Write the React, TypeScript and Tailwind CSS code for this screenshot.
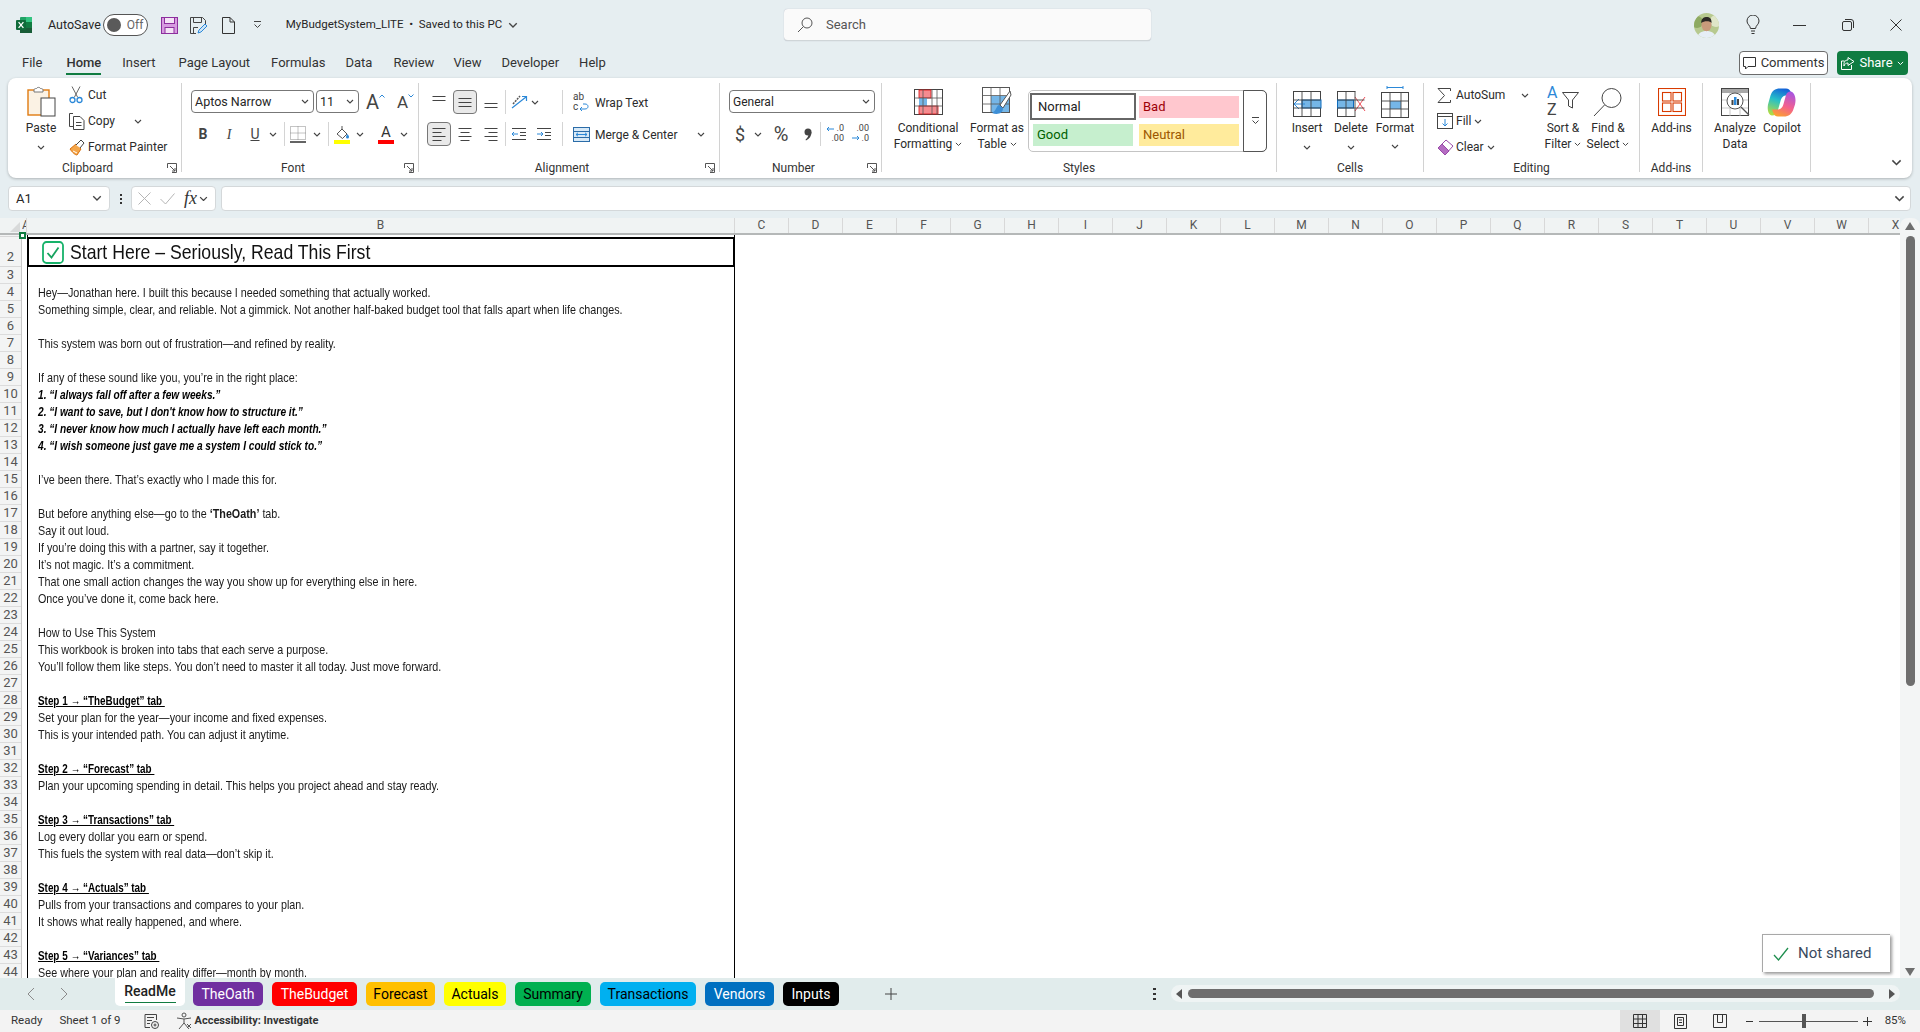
import type { ReactNode } from "react";

// ---- small shared bits ----
function Chev({ className = "", w = 8 }: { className?: string; w?: number }) {
  return (
    <svg width={w} height={w * 0.625} viewBox="0 0 8 5" className={`shrink-0 ${className}`} fill="none" stroke="#444" strokeWidth="1.1">
      <path d="M1 1l3 3 3-3" />
    </svg>
  );
}

function Divider({ className = "" }: { className?: string }) {
  return <div className={`w-px h-[24px] bg-[#d4d4d4] shrink-0 ${className}`} />;
}

function Launcher() {
  return (
    <svg width="10" height="10" viewBox="0 0 10 10" fill="none" stroke="#555" strokeWidth="1">
      <path d="M0.5 5V0.5H9.5V9.5H5" />
      <path d="M3 3l5 5M5 8h3V5" />
    </svg>
  );
}

function Group({ label, launcher, className = "", children }: { label?: string; launcher?: boolean; className?: string; children: ReactNode }) {
  return (
    <div className={`h-[89px] flex flex-col shrink-0 border-r border-[#d2d2d2] ${className}`}>
      <div className="h-[79px] shrink-0">{children}</div>
      <div className="flex items-center h-[12px] shrink-0">
        <div className="flex-1 text-center text-[12px] leading-[12px] text-[#333]">{label}</div>
        {launcher && (
          <div className="w-[14px] shrink-0">
            <Launcher />
          </div>
        )}
      </div>
    </div>
  );
}

function Large({ icon, lines, className = "" }: { icon: ReactNode; lines: ReactNode[]; className?: string }) {
  return (
    <div className={`flex flex-col items-center shrink-0 ${className}`}>
      <div className="h-[32px] mt-[3px] flex items-center justify-center">{icon}</div>
      <div className="mt-[2px] text-[12px] leading-[16px] text-[#2b2b2b] text-center whitespace-nowrap">
        {lines.map((l, i) => (
          <div key={i} className="flex items-center justify-center gap-[3px] h-[16px]">
            {l}
          </div>
        ))}
      </div>
    </div>
  );
}

function Small({ icon, text, chev, chevClass = "ml-[3px]" }: { icon: ReactNode; text: string; chev?: boolean; chevClass?: string }) {
  return (
    <div className="flex items-center h-[26px] whitespace-nowrap text-[12px] text-[#2b2b2b]">
      <div className="w-[19px] shrink-0 flex items-center">{icon}</div>
      {text}
      {chev && <Chev className={chevClass} />}
    </div>
  );
}

function Slot({ w, selected, children, className = "" }: { w: string; selected?: boolean; children: ReactNode; className?: string }) {
  return (
    <div className={`${w} h-[24px] shrink-0 flex items-center justify-center ${className}`}>
      {selected ? (
        <div className="w-[24px] h-[24px] rounded-[4px] bg-[#e9e9e9] border border-[#777] flex items-center justify-center">{children}</div>
      ) : (
        children
      )}
    </div>
  );
}

// ---- title bar icons ----
function ExcelLogo() {
  return (
    <svg width="18" height="18" viewBox="0 0 18 18">
      <rect x="5" y="1" width="12" height="16" rx="1" fill="#21a366" />
      <rect x="11" y="1" width="6" height="5" fill="#33c481" />
      <rect x="11" y="6" width="6" height="5.5" fill="#107c41" />
      <rect x="5" y="11.5" width="12" height="5.5" fill="#185c37" />
      <rect x="1" y="4" width="10" height="10" rx="1" fill="#0f6b3a" />
      <path d="M3.6 6.2l4.8 5.6M8.4 6.2l-4.8 5.6" stroke="#fff" strokeWidth="1.3" />
    </svg>
  );
}

function SavePurple() {
  return (
    <svg width="17" height="17" viewBox="0 0 17 17">
      <rect x="0.5" y="0.5" width="16" height="16" fill="#d79be0" stroke="#8d2f9e" />
      <rect x="3.5" y="0.5" width="10" height="6" fill="#f4e3f6" stroke="#8d2f9e" />
      <rect x="4" y="10.5" width="9" height="6" fill="#f4e3f6" stroke="#8d2f9e" />
    </svg>
  );
}

function SaveAs() {
  return (
    <svg width="17" height="17" viewBox="0 0 17 17" fill="none" stroke="#444">
      <path d="M0.5 0.5H12.5L15.5 3.5V7M0.5 0.5V16.5H6" />
      <path d="M3.5 0.5V5.5H11.5V0.5M3.5 16.5V10.5H8" />
      <path d="M8 16l1-3 6-6 2 2-6 6z" stroke="#2b88d8" fill="#cfe5f7" />
    </svg>
  );
}

function NewDoc() {
  return (
    <svg width="13" height="17" viewBox="0 0 13 17" fill="none" stroke="#333">
      <path d="M0.5 0.5H8L12.5 5V16.5H0.5Z" />
      <path d="M8 0.5V5H12.5" />
    </svg>
  );
}

function Avatar() {
  return (
    <svg width="25" height="25" viewBox="0 0 25 25">
      <defs>
        <clipPath id="av">
          <circle cx="12.5" cy="12.5" r="12.5" />
        </clipPath>
      </defs>
      <g clipPath="url(#av)">
        <rect width="25" height="25" fill="#b7c98f" />
        <circle cx="3" cy="9" r="6" fill="#8eaa62" />
        <circle cx="22" cy="8" r="6" fill="#dfe6c8" />
        <path d="M3 25c1-6 6-7 9.5-7s8.5 1 9.5 7z" fill="#e6eef6" />
        <ellipse cx="12.5" cy="12" rx="5" ry="6.2" fill="#c99a7b" />
        <path d="M7.2 10c0-5 3-6 5.6-6s5 1.500 4.800 6c-1.600-2.500-7.500-2.500-10.400 0z" fill="#2e2a26" />
      </g>
    </svg>
  );
}

// ---- ribbon icons ----
function PasteIcon() {
  return (
    <svg width="29" height="32" viewBox="0 0 29 32">
      <rect x="1" y="4" width="21" height="25" fill="#fbf2e4" stroke="#e07b10" strokeWidth="1.4" />
      <path d="M7 4c0-1 1-1.500 2.500-1.500C10 1 13 1 13.500 2.500 15 2.500 16 3 16 4v2H7z" fill="#fff" stroke="#777" />
      <rect x="14" y="12" width="14" height="18" fill="#fff" stroke="#444" />
    </svg>
  );
}

function CutIcon() {
  return (
    <svg width="14" height="18" viewBox="0 0 14 18" fill="none">
      <path d="M3 0.500L8.500 11M11 0.500L5.500 11" stroke="#666" strokeWidth="1" />
      <circle cx="3.500" cy="14" r="2.500" stroke="#2b88d8" strokeWidth="1.300" />
      <circle cx="10.500" cy="14" r="2.500" stroke="#2b88d8" strokeWidth="1.300" />
    </svg>
  );
}

function CopyIcon() {
  return (
    <svg width="16" height="17" viewBox="0 0 16 17" fill="none" stroke="#444">
      <path d="M4 0.500H0.500V13.500H4" />
      <path d="M4.500 3.500H11L15 7.500V16.500H4.500Z" fill="#fff" />
      <path d="M7 9.500h5.500M7 12.500h5.500" />
    </svg>
  );
}

function PainterIcon() {
  return (
    <svg width="17" height="17" viewBox="0 0 17 17">
      <path d="M1 10l6-5 5 5-4 6c-2 0-5-3-7-6z" fill="#f4a64a" stroke="#d9720f" />
      <path d="M7 6l5-5 3 3-4 5" fill="#fff" stroke="#444" />
      <path d="M4 12l4 2" stroke="#fff" />
    </svg>
  );
}

function GrowA({ up }: { up: boolean }) {
  return (
    <div className="flex items-start text-[#444]">
      <span className={up ? "text-[20px] leading-[22px]" : "text-[17px] leading-[22px]"}>A</span>
      <svg width="6" height="4" viewBox="0 0 6 4" fill="none" stroke="#2b88d8" className="mt-[3px]">
        <path d={up ? "M0.500 3.500L3 1l2.500 2.500" : "M0.500 0.500L3 3l2.500-2.500"} />
      </svg>
    </div>
  );
}

function BordersIcon() {
  return (
    <svg width="16" height="17" viewBox="0 0 16 17" fill="none">
      <path d="M0.500 0.500H15.500V13.500H0.500ZM8 0.500V13.500M0.500 7H15.500" stroke="#888" strokeDasharray="1 1" />
      <path d="M0 16H16" stroke="#222" strokeWidth="1.400" />
    </svg>
  );
}

function FillIcon() {
  return (
    <svg width="16" height="19" viewBox="0 0 16 19">
      <path d="M3 9l5-5 5 5-4.500 4.500z" fill="#fff" stroke="#555" />
      <path d="M8 4V1" stroke="#555" />
      <path d="M13.500 9c1 1.500 1.500 2.300 1.500 3a1.300 1.300 0 0 1-3 0c0-.7.5-1.500 1.500-3z" fill="#2b88d8" />
      <rect x="0" y="15" width="16" height="4" fill="#ffff00" />
    </svg>
  );
}

function FontColorIcon() {
  return (
    <div className="flex flex-col items-center w-[16px]">
      <span className="text-[15px] leading-[15px] text-[#333]">A</span>
      <div className="w-[16px] h-[4px] bg-[#ff0000]" />
    </div>
  );
}

function Bars({ kind }: { kind: "top" | "mid" | "bot" | "l" | "c" | "r" }) {
  const base = "M1.500 ";
  const d: Record<string, string> = {
    top: `${base}2.500H14.500M1.500 6.500H14.500`,
    mid: `${base}4.500H14.500M1.500 8.500H14.500M1.500 12.500H14.500`,
    bot: `${base}9.500H14.500M1.500 13.500H14.500`,
    l: `${base}2.500H14.500M1.500 6.500H10.500M1.500 10.500H14.500M1.500 14.500H10.500`,
    c: `${base}2.500H14.500M3.500 6.500H12.500M1.500 10.500H14.500M3.500 14.500H12.500`,
    r: `${base}2.500H14.500M5.500 6.500H14.500M1.500 10.500H14.500M5.500 14.500H14.500`,
  };
  return (
    <svg width="16" height="16" viewBox="0 0 16 16" fill="none" stroke="#444">
      <path d={d[kind]} />
    </svg>
  );
}

function OrientIcon() {
  return (
    <svg width="18" height="16" viewBox="0 0 18 16" fill="none">
      <path d="M2 10L9 2" stroke="#555" strokeWidth="1.500" strokeDasharray="2 1" />
      <path d="M1 14L15 3M11 2.500h4.500V7" stroke="#2b88d8" strokeWidth="1.200" />
    </svg>
  );
}

function IndentIcon({ inc }: { inc?: boolean }) {
  return (
    <svg width="16" height="16" viewBox="0 0 16 16" fill="none">
      <path d="M1 2.500H15M1 13.500H15" stroke="#444" />
      <path d="M9 6.500H15M9 9.500H15" stroke="#444" />
      <path d={inc ? "M1 8H7M5 6l2 2-2 2" : "M7 8H1M3 6L1 8l2 2"} stroke="#2b88d8" />
    </svg>
  );
}

function WrapIcon() {
  return (
    <div className="relative w-[16px] h-[20px] text-[10px] leading-[9.500px] text-[#444]">
      <span className="block">ab</span>
      <span className="block">c</span>
      <svg width="10" height="9" viewBox="0 0 10 9" fill="none" stroke="#2b88d8" className="absolute right-[0px] bottom-[1px]">
        <path d="M1 7h5c4 0 4-5 0-5H4M3 5L1 7l2 2" />
      </svg>
    </div>
  );
}

function MergeIcon() {
  return (
    <svg width="17" height="15" viewBox="0 0 17 15" fill="none">
      <rect x="0.500" y="0.500" width="16" height="14" fill="#d7e9f7" stroke="#2b6ca8" />
      <path d="M0.500 4.500H16.500M0.500 10.500H16.500" stroke="#2b6ca8" />
      <path d="M3 7.500H14M5 5.800L3 7.500l2 1.700M12 5.800l2 1.700-2 1.700" stroke="#2b88d8" />
    </svg>
  );
}

function DecimalIcon({ inc }: { inc?: boolean }) {
  return (
    <div className="relative w-[18px] h-[20px] text-[9px] leading-[9.500px] text-[#444] text-right">
      <div>{inc ? ".0" : ".00"}</div>
      <div>{inc ? ".00" : ".0"}</div>
      <svg width="9" height="6" viewBox="0 0 9 6" fill="none" stroke="#2b88d8" className={`absolute left-0 ${inc ? "top-[2px]" : "top-[11px]"}`}>
        <path d={inc ? "M8 3H1M3 1L1 3l2 2" : "M1 3h7M6 1l2 2-2 2"} />
      </svg>
    </div>
  );
}

function CommaIcon() {
  return (
    <svg width="8" height="13" viewBox="0 0 8 13" fill="#444">
      <circle cx="4" cy="4" r="3.500" />
      <path d="M7.500 4c0 4-2 7-5.500 8.500l-.5-.8C3.500 10 4.500 8 4.500 6z" />
    </svg>
  );
}

function CondFmtIcon() {
  return (
    <svg width="29" height="26" viewBox="0 0 29 26">
      <rect x="0.500" y="0.500" width="28" height="25" fill="#fff" stroke="#444" />
      <rect x="5" y="1" width="12" height="8" fill="#f58b8f" stroke="#d11" strokeWidth="0.800" />
      <rect x="5" y="9" width="8" height="8" fill="#75b6e7" />
      <rect x="5" y="17" width="19" height="8" fill="#f58b8f" stroke="#d11" strokeWidth="0.800" />
      <path d="M9 .5V25.500M18 .5V25.500M23 .5V25.500M.5 9H28.500M.5 17H28.500" stroke="#555" fill="none" strokeWidth="0.800" />
    </svg>
  );
}

function TableIcon() {
  return (
    <svg width="30" height="30" viewBox="0 0 30 30">
      <rect x="0.500" y="0.500" width="27" height="25" fill="#fff" stroke="#555" />
      <rect x="9" y="9" width="18" height="16" fill="#75b6e7" />
      <path d="M9 .5V25.500M18 .5V25.500M.5 8.500H27.500M.5 17H27.500" stroke="#555" fill="none" strokeWidth="0.800" />
      <path d="M28 4L18 18l3 3L29 8z" fill="#fff" stroke="#555" />
      <path d="M17 18c-3 1-2 5-7 8 5 2 11 1 11-5z" fill="#3d8fd6" />
    </svg>
  );
}

function GridIcon({ children }: { children?: ReactNode }) {
  return (
    <svg width="30" height="30" viewBox="0 0 30 30">
      <rect x="1.500" y="4.500" width="27" height="25" fill="#fff" stroke="#444" />
      {children}
      <path d="M10 4.500V29.500M19 4.500V29.500M1.500 13H28.500M1.500 21H28.500" stroke="#444" fill="none" strokeWidth="0.900" />
    </svg>
  );
}

function InsertIcon() {
  return (
    <GridIcon>
      <rect x="10" y="13" width="19" height="8" fill="#75b6e7" stroke="#0f6cbd" />
      <path d="M13 17H2M7 12l-5 5 5 5" stroke="#2b88d8" fill="#fff" />
    </GridIcon>
  );
}

function DeleteIcon() {
  return (
    <GridIcon>
      <rect x="1.500" y="13" width="16" height="8" fill="#75b6e7" stroke="#0f6cbd" />
      <rect x="19.500" y="4" width="10" height="26" fill="#fff" />
      <path d="M19 10l10 14M29 10L19 24" stroke="#f0505a" />
    </GridIcon>
  );
}

function FormatIcon() {
  return (
    <svg width="30" height="32" viewBox="0 0 30 32">
      <path d="M7 1.500H23M7 0V3M23 0V3" stroke="#2b88d8" fill="none" />
      <rect x="1.500" y="6.500" width="27" height="25" fill="#fff" stroke="#444" />
      <rect x="10" y="15" width="11" height="8" fill="#75b6e7" />
      <path d="M10 6.500V31.500M21 6.500V31.500M1.500 15H28.500M1.500 23H28.500" stroke="#444" fill="none" strokeWidth="0.900" />
    </svg>
  );
}

function FillDown() {
  return (
    <svg width="16" height="16" viewBox="0 0 16 16" fill="none">
      <rect x="0.500" y="0.500" width="15" height="15" stroke="#444" />
      <path d="M0.500 3.500H15.500" stroke="#444" />
      <path d="M8 6v7M5.500 10.500L8 13l2.500-2.500" stroke="#2b88d8" />
    </svg>
  );
}

function Eraser() {
  return (
    <svg width="17" height="17" viewBox="0 0 17 17">
      <path d="M1 9l8-8 7 6-8 9z" fill="#fff" stroke="#9a4aa8" />
      <path d="M1 9l4-4 7 7-4 4z" fill="#b46cc2" stroke="#9a4aa8" />
    </svg>
  );
}

function SortFilter() {
  return (
    <div className="relative w-[32px] h-[30px] text-[#444]">
      <span className="absolute left-0 top-[-2px] text-[16px] leading-[16px] text-[#2b88d8]">A</span>
      <span className="absolute left-0 top-[15px] text-[16px] leading-[16px]">Z</span>
      <svg width="17" height="17" viewBox="0 0 17 17" fill="none" stroke="#444" className="absolute right-0 top-[5px]">
        <path d="M0.500 0.500H16.500L10.500 8V16L6.500 14V8Z" />
      </svg>
    </div>
  );
}

function FindIcon() {
  return (
    <svg width="30" height="30" viewBox="0 0 30 30" fill="none" stroke="#444">
      <circle cx="18.500" cy="11" r="9.500" />
      <path d="M11.500 18L1 29" />
    </svg>
  );
}

function AddinsIcon() {
  return (
    <svg width="28" height="28" viewBox="0 0 28 28" fill="none" stroke="#d83b01" strokeWidth="1.100">
      <rect x="0.500" y="0.500" width="27" height="27" />
      <rect x="4.500" y="4.500" width="8.500" height="8.500" />
      <rect x="15" y="4.500" width="8.500" height="8.500" />
      <rect x="4.500" y="15" width="8.500" height="8.500" />
      <rect x="15" y="15" width="8.500" height="8.500" />
    </svg>
  );
}

function AnalyzeIcon() {
  return (
    <svg width="29" height="29" viewBox="0 0 29 29">
      <rect x="0.500" y="0.500" width="27" height="27" fill="#fff" stroke="#444" />
      <rect x="1" y="1" width="26" height="4" fill="#a8a8a8" />
      <path d="M9 5v23M19 5v23M1 12H27M1 20H27" stroke="#bbb" strokeWidth="0.800" />
      <circle cx="14" cy="13" r="8" fill="#fff" stroke="#555" />
      <path d="M20 19l8 8" stroke="#555" strokeWidth="1.200" />
      <rect x="10.500" y="12" width="2" height="5" fill="#444" />
      <rect x="13" y="9" width="2.500" height="8" fill="#2b88d8" />
      <rect x="16" y="11" width="2" height="6" fill="#444" />
    </svg>
  );
}

function CopilotIcon() {
  return (
    <svg width="30" height="29" viewBox="0 0 30 29">
      <defs>
        <linearGradient id="cpA" x1="0.600" y1="0" x2="0.300" y2="1">
          <stop offset="0" stopColor="#1464d8" />
          <stop offset="0.450" stopColor="#26c0c8" />
          <stop offset="1" stopColor="#b4dc40" />
        </linearGradient>
        <linearGradient id="cpB" x1="0.700" y1="0" x2="0.300" y2="1">
          <stop offset="0" stopColor="#a855e0" />
          <stop offset="0.550" stopColor="#f4608e" />
          <stop offset="1" stopColor="#fba030" />
        </linearGradient>
      </defs>
      <path d="M13 0.500h6c2.500 0 4 1.500 5 4l1 3h-5c-4 0-5.500 2-6.500 5.500l-2.500 9c-1 3.500-3 5.500-6 5.500C1.500 27 0 22 1 16.500l2.500-9C5 3 8 0.500 13 0.500z" fill="url(#cpA)" />
      <path d="M17 28.500h-6c-2.500 0-4-1.500-5-4l-1-3h5c4 0 5.500-2 6.500-5.500l2.500-9c.8-2.500 3-4 5-3.500 3.500 1 5.500 6.500 4 13l-1.500 4.500c-1.500 5-5 7.500-9.500 7.500z" fill="url(#cpB)" />
    </svg>
  );
}

// ---- sheet data ----
type Row = { n: number; t?: ReactNode; k?: "bi" | "step" };
const rowData: Row[] = [
  { n: 3 },
  { n: 4, t: "Hey—Jonathan here. I built this because I needed something that actually worked." },
  { n: 5, t: "Something simple, clear, and reliable. Not a gimmick. Not another half-baked budget tool that falls apart when life changes." },
  { n: 6 },
  { n: 7, t: "This system was born out of frustration—and refined by reality." },
  { n: 8 },
  { n: 9, t: "If any of these sound like you, you’re in the right place:" },
  { n: 10, k: "bi", t: "1. “I always fall off after a few weeks.”" },
  { n: 11, k: "bi", t: "2. “I want to save, but I don't know how to structure it.”" },
  { n: 12, k: "bi", t: "3. “I never know how much I actually have left each month.”" },
  { n: 13, k: "bi", t: "4. “I wish someone just gave me a system I could stick to.”" },
  { n: 14 },
  { n: 15, t: "I’ve been there. That’s exactly who I made this for." },
  { n: 16 },
  { n: 17, t: <>But before anything else—go to the <b>‘TheOath’</b> tab.</> },
  { n: 18, t: "Say it out loud." },
  { n: 19, t: "If you’re doing this with a partner, say it together." },
  { n: 20, t: "It’s not magic. It’s a commitment." },
  { n: 21, t: "That one small action changes the way you show up for everything else in here." },
  { n: 22, t: "Once you’ve done it, come back here." },
  { n: 23 },
  { n: 24, t: "How to Use This System" },
  { n: 25, t: "This workbook is broken into tabs that each serve a purpose." },
  { n: 26, t: "You’ll follow them like steps. You don’t need to master it all today. Just move forward." },
  { n: 27 },
  { n: 28, k: "step", t: "Step 1 → “TheBudget” tab " },
  { n: 29, t: "Set your plan for the year—your income and fixed expenses." },
  { n: 30, t: "This is your intended path. You can adjust it anytime." },
  { n: 31 },
  { n: 32, k: "step", t: "Step 2 → “Forecast” tab " },
  { n: 33, t: "Plan your upcoming spending in detail. This helps you project ahead and stay ready." },
  { n: 34 },
  { n: 35, k: "step", t: "Step 3 → “Transactions” tab " },
  { n: 36, t: "Log every dollar you earn or spend." },
  { n: 37, t: "This fuels the system with real data—don’t skip it." },
  { n: 38 },
  { n: 39, k: "step", t: "Step 4 → “Actuals” tab " },
  { n: 40, t: "Pulls from your transactions and compares to your plan." },
  { n: 41, t: "It shows what really happened, and where." },
  { n: 42 },
  { n: 43, k: "step", t: "Step 5 → “Variances” tab " },
  { n: 44, t: "See where your plan and reality differ—month by month." },
];

const columns = "CDEFGHIJKLMNOPQRSTUVWX".split("");

const tabs = [
  { name: "TheOath", cls: "w-[70px] bg-[#7030a0] text-white" },
  { name: "TheBudget", cls: "w-[85px] bg-[#ff0000] text-white" },
  { name: "Forecast", cls: "w-[69px] bg-[#ffc000] text-black" },
  { name: "Actuals", cls: "w-[62px] bg-[#ffff00] text-black" },
  { name: "Summary", cls: "w-[76px] bg-[#00b050] text-black" },
  { name: "Transactions", cls: "w-[96px] bg-[#00b0f0] text-black" },
  { name: "Vendors", cls: "w-[69px] bg-[#0070c0] text-white" },
  { name: "Inputs", cls: "w-[56px] bg-black text-white" },
];

const menu = [
  { name: "File", cls: "ml-[22px]" },
  { name: "Home", cls: "ml-[24px] font-medium border-b-2 border-[#107c41]" },
  { name: "Insert", cls: "ml-[21px]" },
  { name: "Page Layout", cls: "ml-[23px]" },
  { name: "Formulas", cls: "ml-[21px]" },
  { name: "Data", cls: "ml-[20px]" },
  { name: "Review", cls: "ml-[21px]" },
  { name: "View", cls: "ml-[19px]" },
  { name: "Developer", cls: "ml-[20px]" },
  { name: "Help", cls: "ml-[20px]" },
];

export default function App() {
  return (
    <div className="w-[1920px] h-[1032px] overflow-hidden flex flex-col bg-[#e6eef1] font-[Roboto,sans-serif] text-[#262626]">
      {/* title bar */}
      <div className="h-[50px] flex items-center shrink-0">
        <div className="w-[784px] shrink-0 flex items-center">
          <div className="ml-[15px]"><ExcelLogo /></div>
          <span className="ml-[15px] text-[12.5px]">AutoSave</span>
          <div className="ml-[2px] w-[45px] h-[22px] rounded-full border border-[#555] bg-white flex items-center">
            <div className="ml-[3px] w-[14px] h-[14px] rounded-full bg-[#5a5a5a]" />
            <span className="ml-[6px] text-[12px] text-[#666]">Off</span>
          </div>
          <div className="ml-[13px]"><SavePurple /></div>
          <div className="ml-[12px]"><SaveAs /></div>
          <div className="ml-[15px]"><NewDoc /></div>
          <svg width="9" height="8" viewBox="0 0 9 8" fill="none" stroke="#444" className="ml-[18px]">
            <path d="M1 .5H8M1.500 3.500l3 3 3-3" />
          </svg>
          <span className="ml-[24px] text-[11.5px] whitespace-nowrap">MyBudgetSystem_LITE&nbsp; •&nbsp; Saved to this PC</span>
          <Chev className="ml-[6px]" w={10} />
        </div>
        <div className="w-[367px] h-[32px] shrink-0 rounded-[4px] bg-[#fafafa] border-b border-[#cfd5d8] shadow-[0_0_1px_#aab] flex items-center">
          <svg width="16" height="16" viewBox="0 0 16 16" fill="none" stroke="#555" className="ml-[13px]">
            <circle cx="10" cy="6" r="5" />
            <path d="M6.500 9.500L1 15" />
          </svg>
          <span className="ml-[13px] text-[13px] text-[#555]">Search</span>
        </div>
        <div className="ml-[543px]"><Avatar /></div>
        <svg width="14" height="20" viewBox="0 0 14 20" fill="none" stroke="#333" className="ml-[27px]">
          <path d="M4.500 13.500C4 10 1 9.500 1 6a6 6 0 0 1 12 0c0 3.500-3 4-3.500 7.500zM5 16h4M5.500 18.500h3" />
        </svg>
        <div className="ml-[33px] w-[13px] h-px bg-[#333]" />
        <svg width="12" height="12" viewBox="0 0 12 12" fill="none" stroke="#333" className="ml-[36px]">
          <rect x="0.500" y="2.500" width="9" height="9" rx="1.500" />
          <path d="M3 .5h6a2.500 2.500 0 0 1 2.500 2.500v6" />
        </svg>
        <svg width="12" height="12" viewBox="0 0 12 12" fill="none" stroke="#333" className="ml-[36px]">
          <path d="M.5 .5l11 11M11.500 .5l-11 11" />
        </svg>
      </div>

      {/* menu row */}
      <div className="h-[28px] flex shrink-0 text-[13px] text-[#333] relative">
        {menu.map((m) => (
          <div key={m.name} className={`h-[25px] leading-[26px] whitespace-nowrap ${m.cls}`}>
            {m.name}
          </div>
        ))}
        <div className="ml-auto h-[24px] w-[89px] mt-px rounded-[4px] border border-[#6b6b6b] bg-white flex items-center justify-center gap-[5px]">
          <svg width="13" height="13" viewBox="0 0 13 13" fill="none" stroke="#333">
            <path d="M.5 .5H12.500V9.500H5L2.500 12V9.500H.5Z" />
          </svg>
          Comments
        </div>
        <div className="ml-[9px] mr-[12px] mt-px h-[24px] w-[71px] rounded-[4px] bg-[#107c41] text-white flex items-center justify-center gap-[4px]">
          <svg width="14" height="14" viewBox="0 0 14 14" fill="none" stroke="#fff">
            <path d="M3.500 5H.5V13.500H10.500V9M7 1.500l6 4-6 4V7C5 7 3.500 8 3 10 2.500 6 4 4 7 4z" />
          </svg>
          Share
          <Chev className="brightness-[10]" w={7} />
        </div>
      </div>

      {/* ribbon */}
      <div className="mx-[8px] h-[100px] shrink-0 rounded-[8px] bg-white shadow-[0_1px_3px_rgba(0,0,0,0.25)] flex pt-[5px] relative">
        <Group label="Clipboard" launcher className="w-[174px]">
          <div className="flex">
            <Large className="w-[56px] ml-[5px]" icon={<PasteIcon />} lines={["Paste", <Chev key="c" className="mt-[6px]" />]} />
            <div className="flex flex-col -mt-px">
              <Small icon={<CutIcon />} text="Cut" />
              <Small icon={<CopyIcon />} text="Copy" chev chevClass="ml-[19px]" />
              <Small icon={<PainterIcon />} text="Format Painter" />
            </div>
          </div>
        </Group>

        <Group label="Font" launcher className="w-[237px]">
          <div className="flex items-center mt-[7px] ml-[9px] h-[23px]">
            <div className="w-[123px] h-[23px] rounded-[4px] border border-[#777] flex items-center px-[3px] text-[12.5px] leading-[24px]">
              Aptos Narrow
              <Chev className="ml-auto mr-[1px]" />
            </div>
            <div className="ml-[2px] w-[43px] h-[23px] rounded-[4px] border border-[#777] flex items-center px-[3px] text-[12.5px] leading-[24px]">
              11
              <Chev className="ml-auto mr-[1px]" />
            </div>
            <div className="ml-[7px]"><GrowA up /></div>
            <div className="ml-[12px]"><GrowA up={false} /></div>
          </div>
          <div className="flex items-center mt-[9px] ml-[8px] h-[24px] text-[#444]">
            <Slot w="w-[26px]"><span className="font-bold text-[14px]">B</span></Slot>
            <Slot w="w-[26px]"><span className="italic text-[14px] font-[Liberation_Serif,serif]">I</span></Slot>
            <Slot w="w-[26px]"><span className="underline text-[14px]">U</span></Slot>
            <Chev className="ml-[1px]" />
            <Divider className="ml-[7px]" />
            <div className="ml-[5px]"><BordersIcon /></div>
            <Chev className="ml-[7px]" />
            <Divider className="ml-[7px]" />
            <div className="ml-[5px]"><FillIcon /></div>
            <Chev className="ml-[6px]" />
            <Divider className="ml-[4px] opacity-0" />
            <div className="ml-[9px]"><FontColorIcon /></div>
            <Chev className="ml-[6px]" />
          </div>
        </Group>

        <Group label="Alignment" launcher className="w-[301px]">
          <div className="flex items-center mt-[7px] ml-[7px] h-[24px] text-[12px] text-[#2b2b2b]">
            <Slot w="w-[26px]"><Bars kind="top" /></Slot>
            <Slot w="w-[26px]" selected><Bars kind="mid" /></Slot>
            <Slot w="w-[26px]"><Bars kind="bot" /></Slot>
            <Divider className="ml-[1px]" />
            <div className="ml-[5px]"><OrientIcon /></div>
            <Chev className="ml-[2px]" />
            <Divider className="ml-[23px]" />
            <div className="ml-[10px] w-[18px]"><WrapIcon /></div>
            <span className="ml-[4px] mt-px whitespace-nowrap">Wrap Text</span>
          </div>
          <div className="flex items-center mt-[8px] ml-[7px] h-[24px] text-[12px] text-[#2b2b2b]">
            <Slot w="w-[26px]" selected><Bars kind="l" /></Slot>
            <Slot w="w-[26px]"><Bars kind="c" /></Slot>
            <Slot w="w-[26px]"><Bars kind="r" /></Slot>
            <Divider className="ml-[1px]" />
            <div className="ml-[5px]"><IndentIcon /></div>
            <div className="ml-[9px]"><IndentIcon inc /></div>
            <Divider className="ml-[10px]" />
            <div className="ml-[10px] w-[18px]"><MergeIcon /></div>
            <span className="ml-[4px] mt-px whitespace-nowrap">Merge &amp; Center</span>
            <Chev className="ml-[20px]" />
          </div>
        </Group>

        <Group label="Number" launcher className="w-[162px]">
          <div className="mt-[7px] ml-[9px] w-[146px] h-[23px] rounded-[4px] border border-[#777] flex items-center px-[3px] text-[12px] leading-[24px]">
            General
            <Chev className="ml-auto mr-[1px]" />
          </div>
          <div className="flex items-center mt-[9px] ml-[10px] h-[24px] text-[#444]">
            <Slot w="w-[20px]"><span className="text-[18px]">$</span></Slot>
            <Chev className="ml-[4px]" />
            <Slot w="w-[20px]" className="ml-[9px]"><span className="text-[20px]">%</span></Slot>
            <Slot w="w-[20px]" className="ml-[7px]"><CommaIcon /></Slot>
            <Divider className="ml-[2px]" />
            <div className="ml-[5px]"><DecimalIcon inc /></div>
            <div className="ml-[7px]"><DecimalIcon /></div>
          </div>
        </Group>

        <Group label="Styles" className="w-[395px]">
          <div className="flex">
            <Large className="w-[78px] ml-[7px]" icon={<CondFmtIcon />} lines={["Conditional", <>Formatting <Chev w={7} /></>]} />
            <Large className="w-[58px] ml-px" icon={<TableIcon />} lines={["Format as", <>Table <Chev w={7} /></>]} />
            <div className="ml-[2px] mt-[7px] w-[239px] h-[62px] rounded-[5px] border border-[#c4c4c4] flex text-[13px]">
              <div className="w-[214px] pt-[2px] pl-px">
                <div className="flex items-center">
                  <div className="w-[106px] h-[27px] border-2 border-[#666] flex items-center pl-[6px] text-[#222]">Normal</div>
                  <div className="ml-[3px] w-[100px] h-[22px] bg-[#ffc7ce] text-[#9c0006] flex items-center pl-[4px]">Bad</div>
                </div>
                <div className="flex mt-[4px]">
                  <div className="ml-[3px] w-[100px] h-[22px] bg-[#c6efce] text-[#006100] flex items-center pl-[4px]">Good</div>
                  <div className="ml-[6px] w-[100px] h-[22px] bg-[#ffeb9c] text-[#9c5700] flex items-center pl-[4px]">Neutral</div>
                </div>
              </div>
              <div className="flex-1 -my-px -mr-px border border-[#555] rounded-r-[5px] flex items-center justify-center">
                <svg width="9" height="8" viewBox="0 0 9 8" fill="none" stroke="#444">
                  <path d="M1 .5H8M1.500 3.500l3 3 3-3" />
                </svg>
              </div>
            </div>
          </div>
        </Group>

        <Group label="Cells" className="w-[147px]">
          <div className="flex pl-[8px]">
            <Large className="w-[44px]" icon={<InsertIcon />} lines={["Insert", <Chev key="c" className="mt-[6px]" />]} />
            <Large className="w-[44px]" icon={<DeleteIcon />} lines={["Delete", <Chev key="c" className="mt-[6px]" />]} />
            <Large className="w-[44px]" icon={<FormatIcon />} lines={["Format", <Chev key="c" className="mt-[4px]" />]} />
          </div>
        </Group>

        <Group label="Editing" className="w-[216px]">
          <div className="flex">
            <div className="w-[103px] ml-[13px] shrink-0 flex flex-col -mt-px">
              <Small
                icon={<svg width="15" height="15" viewBox="0 0 15 15" fill="none" stroke="#444"><path d="M13.500 3V.5H1L7.500 7.500 1 14.500H13.500V12" /></svg>}
                text="AutoSum"
                chev
                chevClass="ml-[16px]"
              />
              <Small icon={<FillDown />} text="Fill" chev />
              <Small icon={<Eraser />} text="Clear" chev />
            </div>
            <Large className="w-[46px]" icon={<SortFilter />} lines={["Sort &", <>Filter <Chev w={7} /></>]} />
            <Large className="w-[44px]" icon={<FindIcon />} lines={["Find &", <>Select <Chev w={7} /></>]} />
          </div>
        </Group>

        <Group label="Add-ins" className="w-[63px]">
          <Large className="w-[63px]" icon={<AddinsIcon />} lines={["Add-ins"]} />
        </Group>

        <Group className="w-[108px]">
          <div className="flex pl-[7px]">
            <Large className="w-[50px]" icon={<AnalyzeIcon />} lines={["Analyze", "Data"]} />
            <Large className="w-[44px]" icon={<CopilotIcon />} lines={["Copilot"]} />
          </div>
        </Group>

        <div className="flex-1 h-[89px] flex items-end justify-end pr-[10px] pb-[6px]">
          <Chev w={11} />
        </div>
      </div>

      {/* formula bar */}
      <div className="mt-[8px] h-[25px] flex items-stretch shrink-0 bg-transparent">
        <div className="ml-[8px] w-[102px] rounded-[4px] bg-white border border-[#d4d8da] flex items-center pl-[7px] pr-[7px] text-[13px]">
          A1
          <Chev className="ml-auto" w={10} />
        </div>
        <div className="w-[21px] flex flex-col items-center justify-center gap-[2px]">
          <div className="w-[2px] h-[2px] bg-[#333]" />
          <div className="w-[2px] h-[2px] bg-[#333]" />
          <div className="w-[2px] h-[2px] bg-[#333]" />
        </div>
        <div className="w-[85px] rounded-[4px] bg-white border border-[#d4d8da] flex items-center pl-[6px] gap-[9px]">
          <svg width="13" height="13" viewBox="0 0 13 13" fill="none" stroke="#b5b5b5">
            <path d="M.5 .5l12 12M12.500 .5l-12 12" />
          </svg>
          <svg width="15" height="12" viewBox="0 0 15 12" fill="none" stroke="#b5b5b5">
            <path d="M.5 6l5 5 9-10.500" />
          </svg>
          <span className="italic font-[Liberation_Serif,serif] text-[18px] text-[#333]">fx</span>
          <Chev className="-ml-[7px]" w={9} />
        </div>
        <div className="ml-[5px] flex-1 mr-[9px] rounded-[4px] bg-white border border-[#d4d8da] flex items-center justify-end pr-[5px]">
          <Chev w={11} />
        </div>
      </div>

      {/* sheet */}
      <div className="mt-[7px] flex-1 flex min-h-0">
        <div className="flex-1 min-w-0 flex flex-col relative">
          {/* column headers */}
          <div className="h-[17px] shrink-0 flex bg-[#f0f3f3] border-b-2 border-[#b5b8b8] text-[12px] text-[#555] overflow-hidden">
            <div className="w-[22px] shrink-0 flex items-end justify-end pr-[2px] pb-[1px]">
              <div className="w-0 h-0 border-l-[10px] border-l-transparent border-b-[10px] border-b-[#d8dada]" />
            </div>
            <div className="w-[5px] shrink-0 border-r border-[#d8d8d8] overflow-hidden leading-[15px]">A</div>
            <div className="w-[708px] shrink-0 border-r border-[#d8d8d8] text-center leading-[15px]">B</div>
            {columns.map((c) => (
              <div key={c} className="w-[54px] shrink-0 border-r border-[#d8d8d8] text-center leading-[15px]">
                {c}
              </div>
            ))}
          </div>

          {/* grid */}
          <div className="flex-1 min-h-0 overflow-hidden flex bg-white">
            <div className="w-[22px] shrink-0 bg-[#f3f4f4] border-r border-[#c8c8c8] text-[13px] text-[#555]">
              <div className="h-[2px] border-b border-[#d8d8d8]" />
              <div className="h-[30px] border-b border-[#d8d8d8] flex items-end justify-center leading-[18px]">2</div>
              {rowData.map((r) => (
                <div key={r.n} className="h-[17px] border-b border-[#dcdcdc] leading-[16px] text-center">
                  {r.n}
                </div>
              ))}
            </div>
            <div className="w-[5px] shrink-0" />
            <div className="w-[708px] shrink-0 border-x border-black">
              <div className="h-[2px]" />
              <div className="-mx-px h-[30px] border-2 border-black flex items-center pl-[13px]">
                <svg width="22" height="23" viewBox="0 0 22 23" fill="none" className="shrink-0">
                  <rect x="1" y="1" width="20" height="21" rx="3.500" stroke="#17b26a" strokeWidth="1.800" />
                  <path d="M5.500 12l4 4.500 7-10" stroke="#17a35f" strokeWidth="1.800" />
                </svg>
                <div className="ml-[6px] origin-left scale-x-[0.84] whitespace-pre text-[21px] leading-[24px] text-[#111] font-['Liberation_Sans',sans-serif]">
                  Start Here – Seriously, Read This First
                </div>
              </div>
              {rowData.map((r) => (
                <div key={r.n} className="h-[17px] pl-[10px] flex items-center">
                  {r.t && (
                    <div
                      className={`origin-left whitespace-pre text-[13px] leading-[16px] font-['Liberation_Sans',sans-serif] ${
                        r.k === "bi"
                          ? "scale-x-[0.78] font-bold italic text-black"
                          : r.k === "step"
                            ? "scale-x-[0.76] font-bold underline text-black"
                            : "scale-x-[0.828] text-[#1a1a1a]"
                      }`}
                    >
                      {r.t}
                    </div>
                  )}
                </div>
              ))}
            </div>
          </div>

          {/* selection handle of A1 */}
          <div className="absolute left-[19px] top-[14px] w-[7px] h-[7px] border-2 border-[#107c41] bg-white" />

          {/* toast */}
          <div className="absolute right-[10px] bottom-[6px] w-[128px] h-[38px] bg-white border-t border-l border-[#a8a8a8] shadow-[2px_2px_3px_rgba(0,0,0,0.4)] flex items-center pl-[10px] gap-[9px] text-[15px] text-[#3a4a60]">
            <svg width="16" height="14" viewBox="0 0 16 14" fill="none" stroke="#1e8e4e" strokeWidth="1.300">
              <path d="M1 8l4.500 5L15 1" />
            </svg>
            Not shared
          </div>
        </div>

        {/* vertical scrollbar */}
        <div className="w-[20px] shrink-0 bg-[#f3f5f5] flex flex-col items-center rounded-t-[8px]">
          <div className="mt-[4px] w-0 h-0 border-x-[5px] border-x-transparent border-b-[8px] border-b-[#6e6e6e]" />
          <div className="mt-[6px] w-[9px] h-[450px] rounded-full bg-[#6e6e6e]" />
          <div className="mt-auto mb-[2px] w-0 h-0 border-x-[5px] border-x-transparent border-t-[8px] border-t-[#6e6e6e]" />
        </div>
      </div>

      {/* sheet tabs */}
      <div className="h-[32px] shrink-0 bg-[#e1ecec] flex items-start text-[14px]">
        <div className="w-[115px] h-[24px] mt-[4px] flex items-center text-[#888] text-[16px] shrink-0">
          <svg width="8" height="14" viewBox="0 0 8 14" fill="none" stroke="#8a8a8a" className="ml-[27px]">
            <path d="M7 1L1 7l6 6" />
          </svg>
          <svg width="8" height="14" viewBox="0 0 8 14" fill="none" stroke="#8a8a8a" className="ml-[25px]">
            <path d="M1 1l6 6-6 6" />
          </svg>
        </div>
        <div className="w-[70px] h-[28px] rounded-b-[5px] bg-white flex flex-col items-center shrink-0">
          <span className="mt-[3px] font-medium text-[#222]">ReadMe</span>
          <div className="mt-auto mb-[3px] w-[51px] h-[2px] bg-[#107c41]" />
        </div>
        <div className="flex mt-[4px] ml-[8px] gap-[9px]">
          {tabs.map((t) => (
            <div key={t.name} className={`h-[24px] rounded-[5px] flex items-center justify-center shrink-0 ${t.cls}`}>
              {t.name}
            </div>
          ))}
        </div>
        <div className="ml-[46px] mt-[4px] h-[24px] flex items-center shrink-0">
          <svg width="12" height="12" viewBox="0 0 12 12" stroke="#444">
            <path d="M6 0V12M0 6H12" />
          </svg>
        </div>
        <div className="ml-[256px] mt-[9px] h-[14px] w-[3px] flex flex-col justify-between py-px shrink-0">
          <div className="h-[2px] bg-[#333]" />
          <div className="h-[2px] bg-[#333]" />
          <div className="h-[2px] bg-[#333]" />
        </div>
        <div className="ml-[15px] mt-[7px] w-[729px] h-[17px] rounded-full bg-[#eff4f4] flex items-center shrink-0">
          <div className="ml-[5px] w-0 h-0 border-y-[5px] border-y-transparent border-r-[6px] border-r-[#555]" />
          <div className="ml-[6px] w-[686px] h-[9px] rounded-full bg-[#6e6e6e]" />
          <div className="ml-auto mr-[5px] w-0 h-0 border-y-[5px] border-y-transparent border-l-[6px] border-l-[#555]" />
        </div>
      </div>

      {/* status bar */}
      <div className="h-[22px] shrink-0 bg-[#f3f3f3] flex items-center text-[11.5px] text-[#333]">
        <span className="ml-[11px]">Ready</span>
        <span className="ml-[17px]">Sheet 1 of 9</span>
        <svg width="15" height="15" viewBox="0 0 15 15" fill="none" stroke="#444" className="ml-[23px]">
          <path d="M1 .5H12.500V6M1 .5V13.500H6M3 3.500H10M3 6.500H8M3 9.500H6" />
          <circle cx="11" cy="11" r="3.500" />
          <circle cx="11" cy="11" r="1" />
        </svg>
        <svg width="18" height="18" viewBox="0 0 18 18" fill="none" stroke="#555" className="ml-[16px]">
          <circle cx="9" cy="3" r="2" />
          <path d="M2 6l7 1 7-1M9 7v4M4 17l5-6 5 6" />
          <path d="M12 12l4 4M16 12l-4 4" />
        </svg>
        <span className="ml-[2px] font-bold text-[11px]">Accessibility: Investigate</span>
        <div className="ml-auto w-[40px] h-[22px] bg-[#e0e0e0] flex items-center justify-center">
          <svg width="14" height="14" viewBox="0 0 14 14" fill="none" stroke="#333">
            <path d="M.5 .5H13.500V13.500H.5ZM.5 5H13.500M.5 9.500H13.500M5 .5V13.500M9.500 .5V13.500" />
          </svg>
        </div>
        <svg width="13" height="15" viewBox="0 0 13 15" fill="none" stroke="#333" className="ml-[14px]">
          <path d="M.5 .5H12.500V14.500H.5ZM3.500 3.500H9.500V11.500H3.500ZM5 6H8M5 8.500H8" />
        </svg>
        <svg width="14" height="14" viewBox="0 0 14 14" fill="none" stroke="#333" className="ml-[26px]">
          <path d="M.5 .5H13.500V13.500H.5ZM4.500 .5V8.500H9.500V.5" />
        </svg>
        <div className="ml-[19px] w-[7px] h-px bg-[#333]" />
        <div className="ml-[6px] w-[99px] h-[14px] flex items-center relative">
          <div className="w-full h-px bg-[#555]" />
          <div className="absolute left-[43px] w-[4px] h-[14px] bg-[#555]" />
        </div>
        <svg width="9" height="9" viewBox="0 0 9 9" stroke="#333" className="ml-[5px]">
          <path d="M4.500 0V9M0 4.500H9" />
        </svg>
        <span className="ml-[13px] mr-[14px]">85%</span>
      </div>
    </div>
  );
}
